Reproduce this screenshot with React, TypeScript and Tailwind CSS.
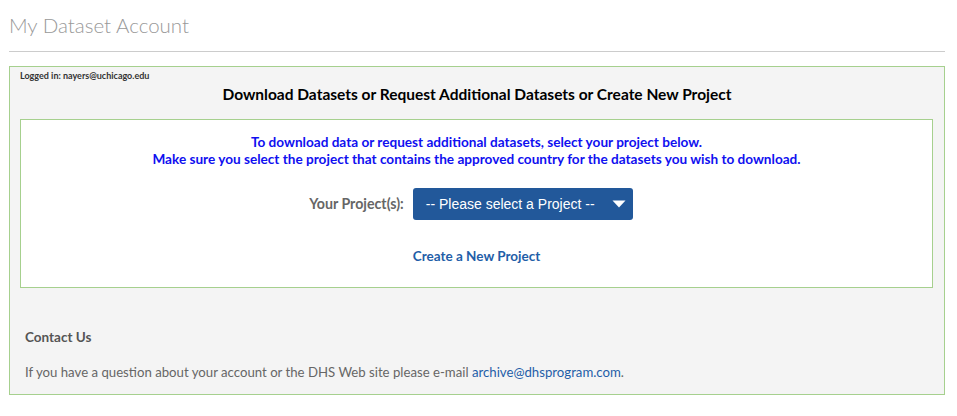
export default function App() {
  return (
    <div className="min-h-[416px] bg-white px-[9px] pt-[11px] font-['Lato','Liberation_Sans',sans-serif] text-[#555]">
      <h1 className="text-[20.5px] font-light leading-[28px] text-[#999]">My Dataset Account</h1>
      <hr className="mt-[12px] mr-[3px] border-t border-[#ccc]" />

      <div className="mt-[14px] mr-[3px] border border-[#a6d08e] bg-[#f4f4f4] px-[10px] pb-[12px] pt-[3px]">
        <p className="text-[9px] font-bold leading-[12px] text-[#333]">Logged in: nayers@uchicago.edu</p>
        <h2 className="mt-[2px] text-center text-[15.5px] font-bold leading-[20px] text-black">
          Download Datasets or Request Additional Datasets or Create New Project
        </h2>

        <div className="mt-[15px] mr-[1px] border border-[#a6d08e] bg-white pb-[21px] pt-[14px]">
          <p className="text-center text-[13.6px] font-bold leading-[17px] text-[#1010f0]">
            To download data or request additional datasets, select your project below.
            <br />
            Make sure you select the project that contains the approved country for the datasets you wish to download.
          </p>

          <div className="mt-[20px] flex items-center justify-center gap-[9px] pr-[11px]">
            <span className="text-[14.2px] font-bold text-[#666]">Your Project(s):</span>
            <button
              type="button"
              className="flex h-[32px] w-[220px] items-center justify-between rounded-[3px] bg-[#22589a] pl-[13px] pr-[7px] font-['Liberation_Sans',sans-serif] text-[14px] text-white"
            >
              -- Please select a Project --
              <svg width="14" height="8" viewBox="0 0 14 8">
                <path d="M0.5 0.5h13L7 7.5z" fill="white" />
              </svg>
            </button>
          </div>

          <div className="mt-[25px] text-center leading-[20px]">
            <a href="#" className="text-[13.5px] font-bold text-[#1f5ea8]">
              Create a New Project
            </a>
          </div>
        </div>

        <h3 className="mt-[39px] px-[5px] text-[13.5px] font-bold leading-[20px] text-[#555]">Contact Us</h3>
        <p className="mt-[15px] px-[5px] text-[13.2px] leading-[20px] text-[#666]">
          If you have a question about your account or the DHS Web site please e-mail{" "}
          <a href="#" className="text-[#1f5ea8]">archive@dhsprogram.com</a>.
        </p>
      </div>
    </div>
  );
}
